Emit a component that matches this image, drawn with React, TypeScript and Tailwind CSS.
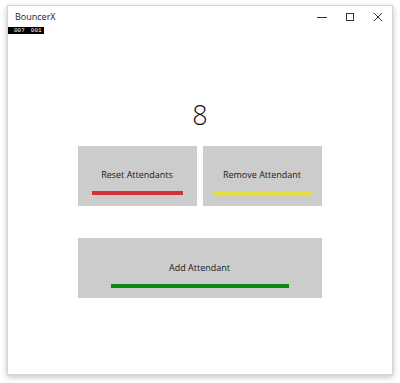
export default function App() {
  return (
    <div className="w-[400px] h-[383px] bg-white pt-[5px] pl-[7px]" style={{ fontFamily: '"Open Sans", "Noto Sans", sans-serif' }}>
      <div className="w-[386px] h-[370px] bg-white border border-[#d4d4d4] shadow-[0_2px_6px_rgba(0,0,0,0.25)] flex flex-col">
        {/* title bar */}
        <div className="h-[21px] flex items-center">
          <span className="ml-[7px] text-[9px] text-[#222]">BouncerX</span>
          <div className="ml-auto flex items-center h-full text-[#333]">
            <div className="w-[28px] h-full flex items-center justify-center">
              <svg width="10" height="10" viewBox="0 0 10 10"><path d="M0 5.5h10" stroke="#333" strokeWidth="1" /></svg>
            </div>
            <div className="w-[28px] h-full flex items-center justify-center">
              <svg width="10" height="10" viewBox="0 0 10 10"><rect x="1.5" y="1.5" width="7" height="7" fill="none" stroke="#333" strokeWidth="1" /></svg>
            </div>
            <div className="w-[28px] h-full flex items-center justify-center">
              <svg width="10" height="10" viewBox="0 0 10 10"><path d="M1 1L9 9M9 1L1 9" stroke="#333" strokeWidth="1" /></svg>
            </div>
          </div>
        </div>
        {/* frame counter */}
        <div className="flex">
          <div className="bg-black text-white text-[6px] leading-[7px] h-[7px] w-[36px] flex gap-[6px] pl-[6px] font-mono">
            <span>007</span>
            <span>001</span>
          </div>
        </div>

        <div className="mt-[66px] text-center text-[27px] leading-[30px] font-light text-[#111]">8</div>

        <div className="mt-[16px] flex justify-center gap-[6px] ml-[-1px]">
          <button className="w-[119px] h-[60px] bg-[#cccccc] flex flex-col items-center">
            <span className="mt-[23px] text-[9px] leading-[12px] text-[#1a1a1a]">Reset Attendants</span>
            <span className="mt-[10px] w-[91px] h-[4px] bg-[#d13438]" />
          </button>
          <button className="w-[119px] h-[60px] bg-[#cccccc] flex flex-col items-center">
            <span className="mt-[23px] text-[9px] leading-[12px] text-[#1a1a1a]">Remove Attendant</span>
            <span className="mt-[10px] w-[99px] h-[4px] bg-[#e8e03c]" />
          </button>
        </div>

        <div className="mt-[32px] flex justify-center ml-[-1px]">
          <button className="w-[244px] h-[60px] bg-[#cccccc] flex flex-col items-center">
            <span className="mt-[24px] text-[9px] leading-[12px] text-[#1a1a1a]">Add Attendant</span>
            <span className="mt-[10px] w-[178px] h-[4px] bg-[#118811]" />
          </button>
        </div>
      </div>
    </div>
  );
}
